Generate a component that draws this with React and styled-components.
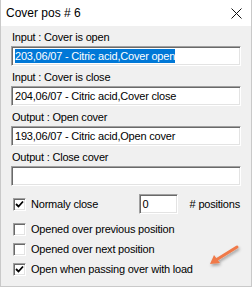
import styled, { createGlobalStyle } from "styled-components";

const GlobalStyle = createGlobalStyle`
    html, body {
        margin: 0;
        padding: 0;
        background: #ffffff;
    }
`;

const Window = styled.div`
    position: relative;
    width: 252px;
    height: 287px;
    box-sizing: border-box;
    border: 1px solid #c9c9c9;
    border-top: none;
    background: #f0f0f0;
    font-family: "Liberation Sans", Arial, sans-serif;
    color: #000;
    overflow: hidden;
`;

const TitleBar = styled.div`
    height: 26px;
    background: #ffffff;
    display: flex;
    align-items: center;
    justify-content: space-between;
    padding: 0 9px 0 5px;
    font-size: 12px;
`;

const Body = styled.div`
    padding: 4px 10px 0 10px;
    display: flex;
    flex-direction: column;
`;

const Field = styled.div`
    display: flex;
    flex-direction: column;
    gap: 2px;
    margin-bottom: 4px;
`;

const Label = styled.div`
    font-size: 11px;
    letter-spacing: -0.2px;
    line-height: 14px;
    padding-left: 1px;
`;

const TextBox = styled.div`
    box-sizing: border-box;
    height: 20px;
    width: ${({ $width }) => $width || "230px"};
    background: #fff;
    border-top: 1px solid #a0a0a0;
    border-left: 1px solid #a0a0a0;
    border-right: 1px solid #fff;
    border-bottom: 1px solid #fff;
    box-shadow: inset 1px 1px 0 #696969, inset -1px -1px 0 #e3e3e3;
    font-size: 11px;
    letter-spacing: -0.2px;
    display: flex;
    align-items: center;
    padding-left: 3px;
    white-space: nowrap;
`;

const Selected = styled.span`
    background: #0078d7;
    color: #fff;
    line-height: 14px;
`;

const OptionsRow = styled.div`
    display: flex;
    align-items: center;
    height: 20px;
    margin-top: ${({ $top }) => $top || 0}px;
`;

const CheckBox = styled.span`
    box-sizing: border-box;
    width: 13px;
    height: 13px;
    flex: none;
    background: #fff;
    border-top: 1px solid #a0a0a0;
    border-left: 1px solid #a0a0a0;
    border-right: 1px solid #fff;
    border-bottom: 1px solid #fff;
    box-shadow: inset 1px 1px 0 #696969, inset -1px -1px 0 #e3e3e3;
    display: flex;
    align-items: center;
    justify-content: center;
    margin-left: 2px;
    margin-right: 5px;
`;

const OptionText = styled.span`
    font-size: 11px;
    letter-spacing: -0.2px;
`;

const Spacer = styled.div`
    flex: 1;
`;

const Arrow = styled.svg`
    position: absolute;
    left: 200px;
    top: 238px;
`;

const Check = () => (
    <svg width="9" height="9" viewBox="0 0 9 9">
        <path d="M1 4 L3.5 6.5 L8 1.5" stroke="#000" strokeWidth="1.8" fill="none" />
    </svg>
);

const Option = ({ checked, children, top }) => (
    <OptionsRow $top={top}>
        <CheckBox>{checked && <Check />}</CheckBox>
        <OptionText>{children}</OptionText>
    </OptionsRow>
);

const fields = [
    { label: "Input : Cover is open", value: "203,06/07 - Citric acid,Cover open", selected: true },
    { label: "Input : Cover is close", value: "204,06/07 - Citric acid,Cover close" },
    { label: "Output : Open cover", value: "193,06/07 - Citric acid,Open cover" },
    { label: "Output : Close cover", value: "" },
];

const App = () => {
    return (
        <>
            <GlobalStyle />
            <Window>
                <TitleBar>
                    <span>Cover pos # 6</span>
                    <svg width="11" height="11" viewBox="0 0 11 11">
                        <path d="M0.5 0.5 L10.5 10.5 M10.5 0.5 L0.5 10.5" stroke="#111" strokeWidth="1" />
                    </svg>
                </TitleBar>
                <Body>
                    {fields.map((f) => (
                        <Field key={f.label}>
                            <Label>{f.label}</Label>
                            <TextBox>
                                {f.selected ? <Selected>{f.value}</Selected> : f.value}
                            </TextBox>
                        </Field>
                    ))}
                    <OptionsRow $top={4}>
                        <CheckBox><Check /></CheckBox>
                        <OptionText>Normaly close</OptionText>
                        <Spacer />
                        <TextBox $width="39px">0</TextBox>
                        <OptionText style={{ marginLeft: 12, marginRight: 1 }}># positions</OptionText>
                    </OptionsRow>
                    <Option top={5}>Opened over previous position</Option>
                    <Option>Opened over next position</Option>
                    <Option checked>Open when passing over with load</Option>
                </Body>
                <Arrow width="50" height="34" viewBox="0 0 50 34">
                    <defs>
                        <filter id="sh" x="-30%" y="-30%" width="160%" height="160%">
                            <feDropShadow dx="1" dy="2" stdDeviation="1.5" floodColor="#000" floodOpacity="0.35" />
                        </filter>
                    </defs>
                    <g filter="url(#sh)">
                        <path d="M36 9 L15 22" stroke="#f07a4a" strokeWidth="3" strokeLinecap="round" />
                        <path d="M9 26 L13 17 L19 25 Z" fill="#f07a4a" />
                    </g>
                </Arrow>
            </Window>
        </>
    );
};

export default App;
